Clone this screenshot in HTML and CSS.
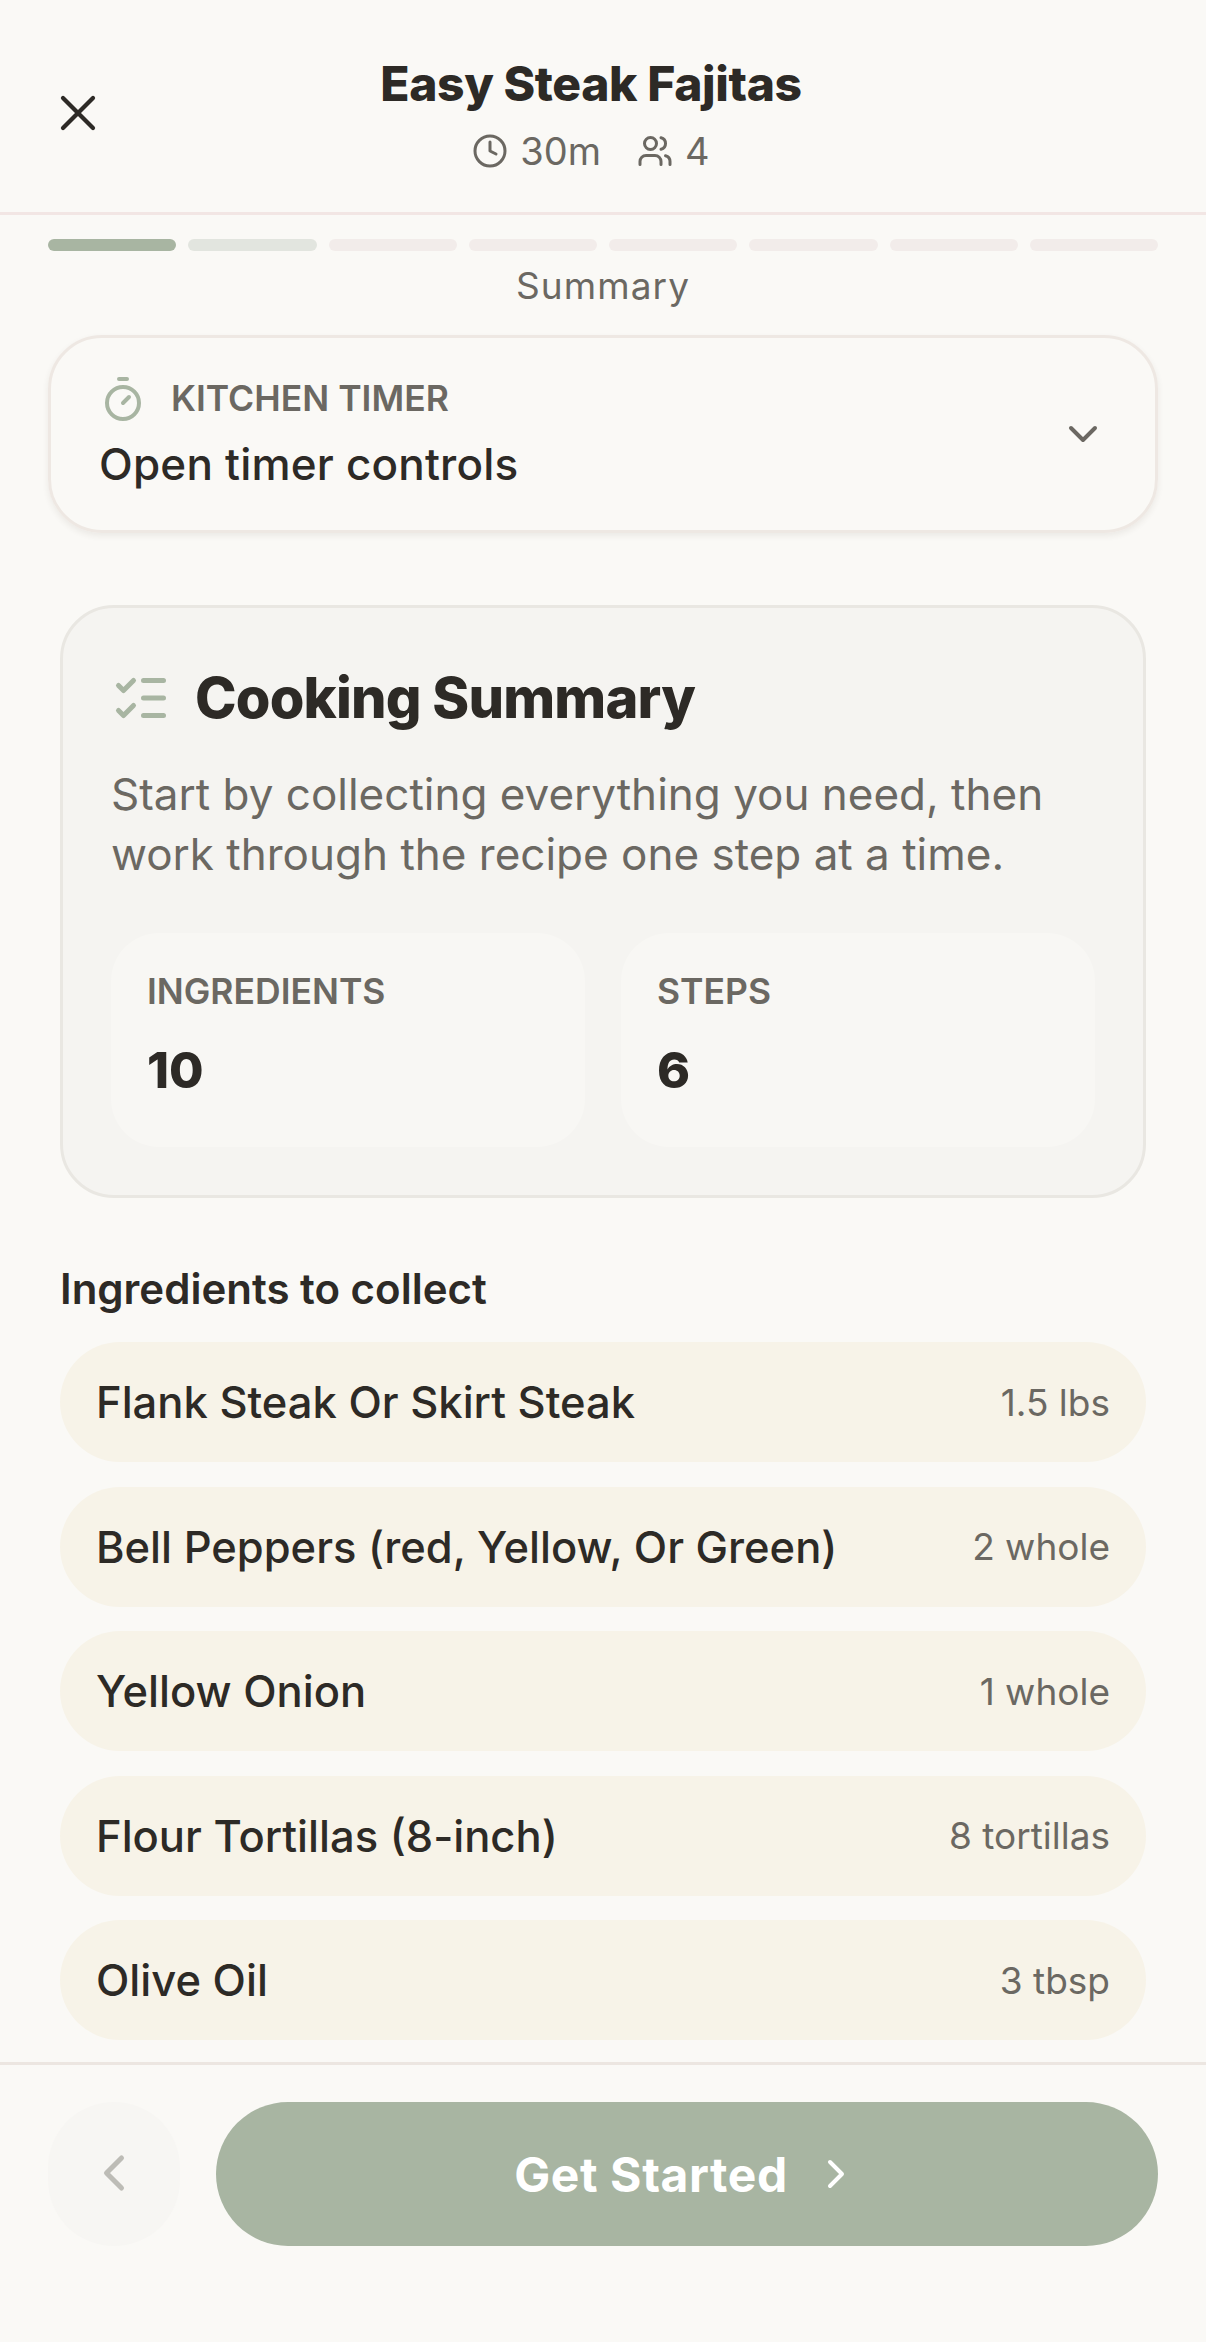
FILE: index.html
```html
<!DOCTYPE html>
<html>
<head>
    <title>Easy Steak Fajitas</title>
    <link rel="stylesheet" href="styles.css">
</head>
<body>
    <header class="top">
        <button class="close">
            <svg width="60" height="60" viewBox="0 0 24 24" fill="none" stroke="#2d2a26" stroke-width="1.7" stroke-linecap="round"><path d="M18 6L6 18M6 6l12 12"/></svg>
        </button>
        <div class="top-text">
            <h1>Easy Steak Fajitas</h1>
            <div class="meta">
                <span class="meta-item">
                    <svg width="36" height="36" viewBox="0 0 24 24" fill="none" stroke="#6b6862" stroke-width="2" stroke-linecap="round" stroke-linejoin="round"><circle cx="12" cy="12" r="10"/><path d="M12 6v6l4 2"/></svg>
                    30m
                </span>
                <span class="meta-item">
                    <svg width="36" height="36" viewBox="0 0 24 24" fill="none" stroke="#6b6862" stroke-width="2" stroke-linecap="round" stroke-linejoin="round"><path d="M16 21v-2a4 4 0 0 0-4-4H6a4 4 0 0 0-4 4v2"/><circle cx="9" cy="7" r="4"/><path d="M22 21v-2a4 4 0 0 0-3-3.87M16 3.13a4 4 0 0 1 0 7.75"/></svg>
                    4
                </span>
            </div>
        </div>
    </header>

    <div class="steps">
        <div class="step step-done"></div>
        <div class="step step-next"></div>
        <div class="step"></div>
        <div class="step"></div>
        <div class="step"></div>
        <div class="step"></div>
        <div class="step"></div>
        <div class="step"></div>
    </div>
    <div class="step-name">Summary</div>

    <div class="timer">
        <div class="timer-left">
            <div class="timer-head">
                <svg width="48" height="48" viewBox="0 0 24 24" fill="none" stroke="#a8b5a2" stroke-width="2" stroke-linecap="round" stroke-linejoin="round"><path d="M10 2h4M12 14l3-3"/><circle cx="12" cy="14" r="8"/></svg>
                <span>KITCHEN TIMER</span>
            </div>
            <div class="timer-text">Open timer controls</div>
        </div>
        <svg width="48" height="48" viewBox="0 0 24 24" fill="none" stroke="#6b6862" stroke-width="2" stroke-linecap="round" stroke-linejoin="round"><path d="M6 9l6 6 6-6"/></svg>
    </div>

    <main class="content">
        <section class="summary">
            <div class="summary-head">
                <svg width="60" height="60" viewBox="0 0 24 24" fill="none" stroke="#a8b5a2" stroke-width="2" stroke-linecap="round" stroke-linejoin="round"><path d="M13 5h8M13 12h8M13 19h8M3 17l2 2 4-4M3 7l2 2 4-4"/></svg>
                <h2>Cooking Summary</h2>
            </div>
            <p>Start by collecting everything you need, then work through the recipe one step at a time.</p>
            <div class="stats">
                <div class="stat">
                    <div class="stat-label">INGREDIENTS</div>
                    <div class="stat-value">10</div>
                </div>
                <div class="stat">
                    <div class="stat-label">STEPS</div>
                    <div class="stat-value">6</div>
                </div>
            </div>
        </section>

        <h3>Ingredients to collect</h3>
        <ul class="items">
            <li><span>Flank Steak Or Skirt Steak</span><span class="qty">1.5 lbs</span></li>
            <li><span>Bell Peppers (red, Yellow, Or Green)</span><span class="qty">2 whole</span></li>
            <li><span>Yellow Onion</span><span class="qty">1 whole</span></li>
            <li><span>Flour Tortillas (8-inch)</span><span class="qty">8 tortillas</span></li>
            <li><span>Olive Oil</span><span class="qty">3 tbsp</span></li>
        </ul>
    </main>

    <footer class="bottom">
        <button class="prev">
            <svg width="60" height="60" viewBox="0 0 24 24" fill="none" stroke="#bdbcb6" stroke-width="2" stroke-linecap="round" stroke-linejoin="round"><path d="M15 18l-6-6 6-6"/></svg>
        </button>
        <button class="next">
            Get Started
            <svg width="48" height="48" viewBox="0 0 24 24" fill="none" stroke="#fff" stroke-width="2" stroke-linecap="round" stroke-linejoin="round"><path d="M9 18l6-6-6-6"/></svg>
        </button>
    </footer>
</body>
</html>
```

FILE: styles.css
```css
* {
    box-sizing: border-box;
}

body {
    margin: 0;
    height: 2342px;
    overflow: hidden;
    display: flex;
    flex-direction: column;
    background-color: #faf9f6;
    color: #2d2a26;
    font-family: Inter, "Noto Sans", sans-serif;
}

button {
    border: none;
    padding: 0;
    font-family: inherit;
    cursor: pointer;
}

.top {
    flex: none;
    height: 215px;
    display: flex;
    align-items: flex-start;
    padding: 0 48px;
    border-bottom: 3px solid #f2e6e4;
}

.close {
    width: 60px;
    height: 60px;
    margin-top: 83px;
    background: none;
}

.top-text {
    flex: 1;
    padding: 54px 84px 0 0;
    text-align: center;
}

h1 {
    margin: 0;
    font-size: 48px;
    line-height: 60px;
    font-weight: 800;
    letter-spacing: -0.4px;
}

.meta {
    display: flex;
    justify-content: center;
    gap: 36px;
    margin-top: 10px;
    color: #6b6862;
    font-size: 38px;
    line-height: 54px;
}

.meta-item {
    display: flex;
    align-items: center;
    gap: 12px;
}

.steps {
    flex: none;
    display: flex;
    gap: 12px;
    padding: 24px 48px 0;
}

.step {
    flex: 1;
    height: 12px;
    border-radius: 6px;
    background-color: #f2ecea;
}

.step-done {
    background-color: #a8b5a2;
}

.step-next {
    background-color: #e2e5df;
}

.step-name {
    flex: none;
    margin-top: 11px;
    text-align: center;
    color: #6b6862;
    font-size: 37px;
    line-height: 48px;
    letter-spacing: 1.1px;
}

.timer {
    flex: none;
    height: 198px;
    margin: 25px 48px 0;
    padding: 0 48px;
    display: flex;
    align-items: center;
    justify-content: space-between;
    border: 3px solid #eee8e3;
    border-radius: 54px;
    box-shadow: 0 3px 6px rgba(60, 50, 40, 0.08);
}

.timer-left {
    padding-bottom: 3px;
}

.timer-head {
    display: flex;
    align-items: center;
    gap: 24px;
    color: #6b6862;
    font-size: 35.5px;
    line-height: 48px;
    font-weight: 600;
}

.timer-text {
    margin-top: 15px;
    font-size: 44px;
    line-height: 53px;
    font-weight: 500;
    letter-spacing: 0.2px;
}

.content {
    flex: 1;
    min-height: 0;
    overflow: hidden;
    padding: 72px 60px 0;
}

.summary {
    height: 593px;
    padding: 54px 48px 0;
    background-color: #f5f4f1;
    border: 3px solid #e9e7e2;
    border-radius: 54px;
}

.summary-head {
    display: flex;
    align-items: center;
    gap: 24px;
}

h2 {
    margin: 0;
    font-size: 56px;
    line-height: 72px;
    font-weight: 800;
    letter-spacing: -0.8px;
}

.summary p {
    margin: 30px 0 0;
    color: #6b6862;
    font-size: 44px;
    line-height: 60px;
}

.stats {
    display: grid;
    grid-template-columns: 1fr 1fr;
    gap: 36px;
    margin-top: 49px;
}

.stat {
    height: 214px;
    padding: 35px 36px;
    background-color: #f8f7f4;
    border-radius: 48px;
}

.stat-label {
    color: #6b6862;
    font-size: 35.5px;
    line-height: 48px;
    font-weight: 600;
}

.stat-value {
    margin-top: 18px;
    font-size: 50px;
    line-height: 72px;
    font-weight: 800;
}

h3 {
    margin: 64px 0 0;
    font-size: 42px;
    line-height: 54px;
    font-weight: 600;
}

.items {
    list-style-type: none;
    margin: 26px 0 0;
    padding: 0;
}

.items li {
    height: 120px;
    margin-bottom: 24.5px;
    padding: 0 36px;
    display: flex;
    align-items: center;
    justify-content: space-between;
    background-color: #f7f3e8;
    border-radius: 60px;
    font-size: 43.5px;
    font-weight: 500;
}

.qty {
    color: #6b6862;
    font-size: 37px;
    font-weight: 400;
}

.bottom {
    flex: none;
    height: 280px;
    display: flex;
    gap: 36px;
    padding: 37px 48px 0;
    border-top: 3px solid #ece6e1;
}

.prev {
    width: 132px;
    height: 144px;
    border-radius: 66px;
    background-color: #f7f6f3;
}

.next {
    flex: 1;
    height: 144px;
    display: flex;
    align-items: center;
    justify-content: center;
    gap: 24px;
    border-radius: 72px;
    background-color: #a8b5a2;
    color: #fff;
    font-size: 48px;
    font-weight: 700;
    letter-spacing: 0.6px;
}
```
